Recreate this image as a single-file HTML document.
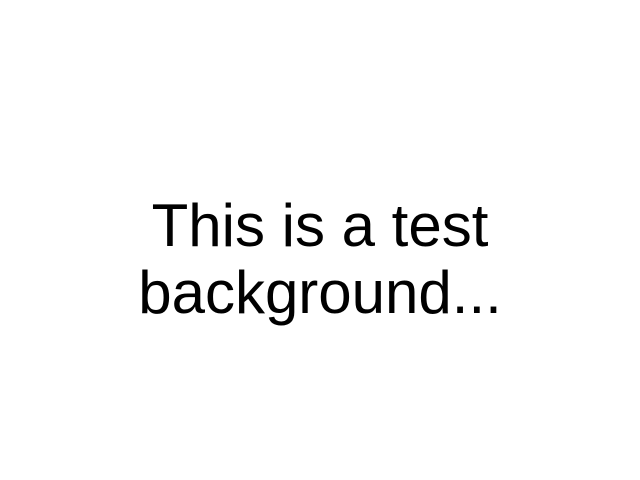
<!DOCTYPE html>
<html>
<head>
<style>
html,body{margin:0;padding:0;width:640px;height:480px;background:#fff;overflow:hidden;}
.t{position:absolute;left:0;top:192px;width:640px;text-align:center;font-family:"Liberation Sans",Arial,sans-serif;font-size:60px;line-height:67px;color:#000;}
</style>
</head>
<body>
<div class="t">This is a test<br>background...</div>
</body>
</html>
